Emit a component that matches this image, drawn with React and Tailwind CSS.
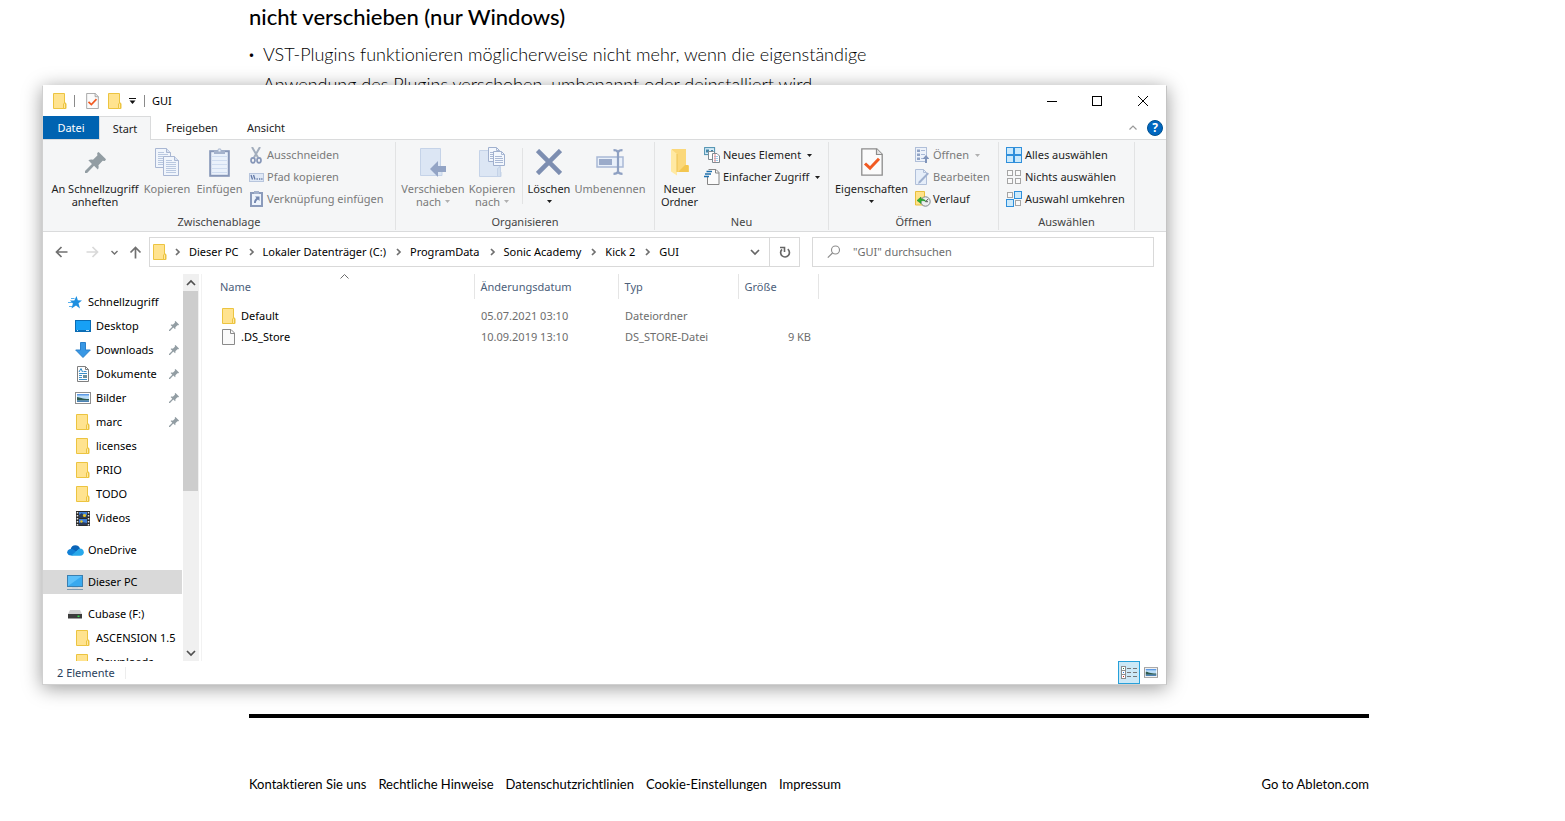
function Folder({ className = "" }) {
  return (
    <svg width="14" height="16" viewBox="0 0 14 16" className={`shrink-0 ${className}`} aria-hidden="true">
      <path d="M.5.500h11v9.500l1.500.5v5H.5z" fill="#ffe38f" stroke="#ecc440" />
      <path d="M10.500 15.500v-4.500l1-1h1v5.500z" fill="#ffe9a6" stroke="#ecc440" />
    </svg>
  );
}

function CheckPage({ w, h }) {
  return (
    <svg width={w} height={h} viewBox="0 0 22 28" className="shrink-0" aria-hidden="true">
      <path d="M.8.8h15l5.400 5.400v21H.8z" fill="#fbfbfb" stroke="#8c8c8c" strokeWidth="1.300" />
      <path d="M15.500.8v5.700h5.700" fill="#e4e4e4" stroke="#8c8c8c" strokeWidth="1.200" />
      <path d="M4 15.500l5 4.700 9-9.500" fill="none" stroke="#f15a22" strokeWidth="3" />
    </svg>
  );
}

function Caret({ className = "" }) {
  return (
    <svg width="5" height="3" viewBox="0 0 5 3" className={`inline-block shrink-0 ${className}`} aria-hidden="true">
      <path d="M0 0h5L2.500 3z" fill="currentColor" />
    </svg>
  );
}

function Pin({ size, className = "" }) {
  return (
    <svg width={size} height={size} viewBox="0 0 20 20" className={`shrink-0 ${className}`} aria-hidden="true">
      <path
        d="M13 0l7 7-1 1.500-2.200-.2-4 4.200c.4 1.800.2 3.200-.6 4.200L8.600 13.200 2 20H0v-2l6.600-6.600L3.200 7.900c1.200-.8 2.600-1 4.400-.6l4.200-4L11.600 1z"
        fill="#929da3"
      />
    </svg>
  );
}

function Pages() {
  return (
    <svg width="24" height="28" viewBox="0 0 24 28" aria-hidden="true">
      {[[0, 0], [8, 8]].map(([x, y]) => (
        <g key={x} transform={`translate(${x} ${y})`}>
          <path d="M.5.500h11l4 4V19.500H.5z" fill="#f0f5fc" stroke="#a9b7d3" />
          <path d="M11.500.500v4h4" fill="#d8e2f2" stroke="#a9b7d3" />
          <path d="M3 6.500h10M3 8.500h10M3 10.500h10M3 12.500h10M3 14.500h10M3 16.500h10M3 4.500h6" stroke="#b9c8e0" />
        </g>
      ))}
    </svg>
  );
}

function Clipboard() {
  return (
    <svg width="21" height="29" viewBox="0 0 21 29" aria-hidden="true">
      <rect x="1.200" y="3.200" width="18.600" height="24.600" fill="#eaf1fb" stroke="#8797b8" strokeWidth="2" />
      <path d="M3 8.500h15M3 12.500h15M3 16.500h15M3 20.500h15M3 24.500h15" stroke="#cfdcf0" />
      <path d="M5 6V2.500h3.500C8.500 1 9.300.4 10.500.4s2 .6 2 2.100H16V6z" fill="#a4b2cc" />
      <rect x="9.500" y="1.500" width="2" height="2" fill="#eaf1fb" />
    </svg>
  );
}

function MoveTo() {
  return (
    <svg width="28" height="30" viewBox="0 0 28 30" aria-hidden="true">
      <path d="M1.500 1.500h20v22l1.500.500v4.500H1.500z" fill="#dce6f4" stroke="#c5d3e8" />
      <path d="M11 22l8-8v5h8v6h-8v5z" fill="#93a4c5" />
    </svg>
  );
}

function CopyTo() {
  return (
    <svg width="28" height="30" viewBox="0 0 28 30" aria-hidden="true">
      <path d="M1.500 3.500h20v21l1.500.500v4.500H1.500z" fill="#dce6f4" stroke="#c5d3e8" />
      <path d="M19.500 29.500v-8l3-2v10z" fill="#d3dfef" stroke="#c5d3e8" />
      {[[10, 0], [15, 4]].map(([x, y]) => (
        <g key={x} transform={`translate(${x} ${y})`}>
          <path d="M.5.500h8l3 3v11H.5z" fill="#f3f7fd" stroke="#a0b0ce" />
          <path d="M8.500.500v3h3M2 5.500h7M2 7.500h8M2 9.500h8M2 11.500h8" fill="none" stroke="#a9b8d4" />
        </g>
      ))}
    </svg>
  );
}

function Cross() {
  return (
    <svg width="26" height="26" viewBox="0 0 26 26" aria-hidden="true">
      <path d="M1.500 1.500l23 23M24.500 1.500l-23 23" stroke="#7d8eb1" strokeWidth="4.600" />
    </svg>
  );
}

function Rename() {
  return (
    <svg width="28" height="26" viewBox="0 0 28 26" aria-hidden="true">
      <rect x="1" y="8" width="26" height="10" fill="#e9f0fa" stroke="#a9b9d6" strokeWidth="1.500" />
      <rect x="3" y="10" width="13" height="6" fill="#9babca" />
      <path d="M17.500 1.200c2.500 0 4 .6 4.500 2.200.5-1.600 2-2.200 4.500-2.200M22 3v20M17.500 24.800c2.500 0 4-.6 4.500-2.200.5 1.600 2 2.200 4.500 2.200" fill="none" stroke="#8ea0c2" strokeWidth="2.200" />
    </svg>
  );
}

function NewFolder() {
  return (
    <svg width="20" height="28" viewBox="0 0 20 28" aria-hidden="true">
      <path d="M2 1h14v16l3 1v6H2z" fill="#fbd87a" />
      <path d="M15 17h3.500v7H8z" fill="#f3c650" />
      <path d="M1 1l6 5v21.500l-6-4z" fill="#ffe9a3" />
      <path d="M7 6v18" stroke="#edc251" />
    </svg>
  );
}

function Scissors() {
  return (
    <svg width="12" height="17" viewBox="0 0 12 17" aria-hidden="true">
      <path d="M2 0l6 10.500M10 0L4 10.500" stroke="#a3aebd" strokeWidth="2" />
      <ellipse cx="3" cy="13.300" rx="2" ry="2.500" fill="none" stroke="#8797b8" strokeWidth="1.700" />
      <ellipse cx="9" cy="13.300" rx="2" ry="2.500" fill="none" stroke="#8797b8" strokeWidth="1.700" />
    </svg>
  );
}

function PathIcon() {
  return (
    <svg width="15" height="9" viewBox="0 0 15 9" aria-hidden="true">
      <rect x=".5" y=".5" width="14" height="8" fill="#dfe8f5" stroke="#b7c5dd" />
      <path d="M2 2l1.500 4.500M4.500 2L6 6.500M7.500 6h1.300M10 6h1.300M12.200 6h1.300" stroke="#6379a6" strokeWidth="1.300" />
    </svg>
  );
}

function ShortcutClip() {
  return (
    <svg width="13" height="16" viewBox="0 0 13 16" aria-hidden="true">
      <rect x="1" y="2" width="11" height="13" fill="#eef4fc" stroke="#8b9bbb" strokeWidth="2" />
      <rect x="4" y="0" width="5" height="3" fill="#a4b2cc" />
      <path d="M5 5.500h4.500V10L8 8.500c-1.500 1-2 2-2.200 3.500H4c0-2 .8-3.600 2.400-5z" fill="#7387b0" />
    </svg>
  );
}

function NewItem() {
  return (
    <svg width="16" height="16" viewBox="0 0 16 16" aria-hidden="true">
      <rect x=".6" y=".6" width="10" height="7" fill="#d5ecf8" stroke="#4a8fae" />
      <path d="M2 2.500h3v3H2zM7 3h2v2H7z" fill="#4386a8" />
      <path d="M4.500 4.500h5l2 2v6h-7z" fill="#fff" stroke="#808b92" />
      <path d="M8.500 6.500h4.500l2.500 2.500v6.500h-7z" fill="#fff" stroke="#808b92" />
      <path d="M10 9.500h4M10 11.500h4M10 13.500h4" stroke="#9ecbec" />
      <path d="M11 7v8" stroke="#ef8d8d" />
    </svg>
  );
}

function EasyAccess() {
  return (
    <svg width="16" height="16" viewBox="0 0 16 16" aria-hidden="true">
      <path d="M4.500.5h7.500l3 3v12H3.500v-8" fill="#fbfbfb" stroke="#858585" />
      <path d="M11.500.5v3.500H15" fill="none" stroke="#858585" />
      <path d="M2.500 2.500H8M1 5H7M0 7.500H5" stroke="#1f70ad" strokeWidth="1.500" />
    </svg>
  );
}

function OpenIcon() {
  return (
    <svg width="14" height="16" viewBox="0 0 14 16" aria-hidden="true">
      <rect x=".5" y=".5" width="11" height="14" fill="#edf2fa" stroke="#b0bfd9" />
      <path d="M2 2.500h3v2.500H2zM2 6.500h3V9H2zM2 10.500h3V13H2z" fill="#8fa2c4" />
      <path d="M6 3.500h4M6 7.500h4M6 11.500h3" stroke="#a9b9d6" />
      <path d="M11 8l3.500 4H12v4h-2v-4H7.500z" fill="#8094ba" />
    </svg>
  );
}

function EditIcon() {
  return (
    <svg width="14" height="16" viewBox="0 0 14 16" aria-hidden="true">
      <path d="M.5.500h8l3 3V15.500H.5z" fill="#e6eef9" stroke="#b0bfd9" />
      <path d="M8.500.500v3h3" fill="none" stroke="#b0bfd9" />
      <path d="M12.500 3.500l1.500 1.300-8.500 9-2.500 1.200.8-2.600z" fill="#9fb0cf" />
    </svg>
  );
}

function History() {
  return (
    <svg width="17" height="16" viewBox="0 0 17 16" aria-hidden="true">
      <path d="M1.500.5h9v9l1 4.500h-10z" fill="#ffe28a" stroke="#e9bf3c" />
      <circle cx="11.500" cy="10.500" r="4.700" fill="#eceff0" stroke="#7d8589" />
      <path d="M11.500 10.700l2.700-2.700M11.500 10.700h2.500" fill="none" stroke="#555" />
      <path d="M3 9.500l4-3.500v2c2.500-.3 4 .7 4.500 2.200-1.500-.7-3-.7-4.500-.2V12.500z" fill="#2eae34" stroke="#1b8a22" strokeWidth=".5" />
    </svg>
  );
}

function Squares({ filled }) {
  const cells = [[0, 0], [8, 0], [0, 8], [8, 8]];
  return (
    <svg width="16" height="16" viewBox="0 0 16 16" aria-hidden="true">
      {cells.map(([x, y], i) =>
        filled.includes(i) ? (
          <rect key={i} x={x + 0.5} y={y + 0.5} width="7" height="7" fill="#cbe9fb" stroke="#2f8fdb" />
        ) : (
          <rect key={i} x={x + 1.5} y={y + 1.5} width="5" height="5" fill="#fafafa" stroke="#a5a5a5" />
        )
      )}
    </svg>
  );
}

function BigButton({ icon, lines, width, disabled, caret }) {
  return (
    <button
      type="button"
      disabled={disabled}
      className={`flex shrink-0 flex-col items-center ${width} ${disabled ? "text-[#7a7a7a]" : "text-[#1e1e1e]"}`}
    >
      <span className="flex h-10 items-center justify-center">{icon}</span>
      {lines.map((line, i) => (
        <span key={line} className="flex h-[13px] items-center whitespace-nowrap leading-[13px]">
          {line}
          {caret && i === 1 && <Caret className="ml-1 text-[#b0b0b0]" />}
        </span>
      ))}
      {caret && lines.length === 1 && (
        <span className="flex h-[13px] items-center">
          <Caret />
        </span>
      )}
    </button>
  );
}

function SmallButton({ icon, label, disabled, caret }) {
  return (
    <button
      type="button"
      disabled={disabled}
      className={`flex h-[22px] items-center whitespace-nowrap ${disabled ? "text-[#7a7a7a]" : "text-[#1e1e1e]"}`}
    >
      <span className="mr-0.5 flex w-[18px] justify-center">{icon}</span>
      {label}
      {caret && <Caret className={`ml-1.5 ${disabled ? "text-[#b0b0b0]" : "text-[#1e1e1e]"}`} />}
    </button>
  );
}

function Group({ label, width, inset, children }) {
  return (
    <section aria-label={label} className={`flex shrink-0 flex-col border-r border-[#e2e3e4] ${width}`}>
      <div className={`flex h-[72px] items-start gap-px ${inset}`}>{children}</div>
      <div className="text-center leading-4 text-[#444]">{label}</div>
    </section>
  );
}

function Ribbon() {
  return (
    <div className="flex overflow-hidden border-y border-[#dadbdc] bg-[#f5f6f7] pb-px pt-0.5 text-[11px]">
      <Group label="Zwischenablage" width="w-[353px]" inset="pl-1.5">
        <BigButton width="w-[92px]" icon={<Pin size={21} />} lines={["An Schnellzugriff", "anheften"]} />
        <BigButton width="w-[50px]" disabled icon={<Pages />} lines={["Kopieren"]} />
        <BigButton width="w-[53px]" disabled icon={<Clipboard />} lines={["Einfügen"]} />
        <div className="flex flex-col pt-0.5">
          <SmallButton disabled icon={<Scissors />} label="Ausschneiden" />
          <SmallButton disabled icon={<PathIcon />} label="Pfad kopieren" />
          <SmallButton disabled icon={<ShortcutClip />} label="Verknüpfung einfügen" />
        </div>
      </Group>
      <Group label="Organisieren" width="w-[259px]" inset="pl-1">
        <BigButton width="w-[66px]" disabled caret icon={<MoveTo />} lines={["Verschieben", "nach"]} />
        <BigButton width="w-[50px]" disabled caret icon={<CopyTo />} lines={["Kopieren", "nach"]} />
        <div className="ml-1 mr-px mt-1.5 h-14 border-l border-[#e2e3e4]" />
        <BigButton width="w-12" caret icon={<Cross />} lines={["Löschen"]} />
        <BigButton width="w-[72px]" disabled icon={<Rename />} lines={["Umbenennen"]} />
      </Group>
      <Group label="Neu" width="w-[174px]" inset="pl-0.5">
        <BigButton width="w-[45px]" icon={<NewFolder />} lines={["Neuer", "Ordner"]} />
        <div className="flex flex-col pt-0.5">
          <SmallButton caret icon={<NewItem />} label="Neues Element" />
          <SmallButton caret icon={<EasyAccess />} label="Einfacher Zugriff" />
        </div>
      </Group>
      <Group label="Öffnen" width="w-[170px]" inset="pl-0.5">
        <BigButton width="w-[81px]" caret icon={<CheckPage w={22} h={28} />} lines={["Eigenschaften"]} />
        <div className="flex flex-col pt-0.5">
          <SmallButton disabled caret icon={<OpenIcon />} label="Öffnen" />
          <SmallButton disabled icon={<EditIcon />} label="Bearbeiten" />
          <SmallButton icon={<History />} label="Verlauf" />
        </div>
      </Group>
      <Group label="Auswählen" width="w-[136px]" inset="pl-1.5">
        <div className="flex flex-col pt-0.5">
          <SmallButton icon={<Squares filled={[0, 1, 2, 3]} />} label="Alles auswählen" />
          <SmallButton icon={<Squares filled={[]} />} label="Nichts auswählen" />
          <SmallButton icon={<Squares filled={[1, 2]} />} label="Auswahl umkehren" />
        </div>
      </Group>
    </div>
  );
}

function TitleBar() {
  return (
    <header className="flex h-[30px] items-center pb-px">
      <div className="flex flex-1 items-center pl-2.5">
        <Folder />
        <span className="ml-[7px] h-3 border-l border-[#8a8a8a]" />
        <button type="button" aria-label="Eigenschaften" className="ml-[11px]">
          <CheckPage w={13} h={16} />
        </button>
        <button type="button" aria-label="Neuer Ordner" className="ml-[9px]">
          <Folder />
        </button>
        <button type="button" aria-label="Symbolleiste anpassen" className="ml-[7px]">
          <svg width="7" height="6" viewBox="0 0 7 6" aria-hidden="true">
            <path d="M0 .5h7" stroke="#111" />
            <path d="M.5 2.500h6L3.500 6z" fill="#111" />
          </svg>
        </button>
        <span className="ml-2 h-3 border-l border-[#8a8a8a]" />
        <h2 className="ml-[7px]">GUI</h2>
      </div>
      <button type="button" aria-label="Minimieren" className="flex h-full w-[45px] items-center justify-center">
        <svg width="10" height="10" viewBox="0 0 10 10"><path d="M0 5.500h10" stroke="#000" /></svg>
      </button>
      <button type="button" aria-label="Maximieren" className="flex h-full w-[46px] items-center justify-center">
        <svg width="10" height="10" viewBox="0 0 10 10"><rect x=".5" y=".5" width="9" height="9" fill="none" stroke="#000" /></svg>
      </button>
      <button type="button" aria-label="Schließen" className="flex h-full w-[46px] items-center justify-center">
        <svg width="10" height="10" viewBox="0 0 10 10"><path d="M0 0l10 10M10 0L0 10" stroke="#000" /></svg>
      </button>
    </header>
  );
}

function Tabs() {
  return (
    <nav aria-label="Menüband" className="-mb-px flex h-6 items-stretch text-[11px] text-[#222]">
      <button type="button" className="mb-px w-14 bg-[#0063b1] text-white">Datei</button>
      <button type="button" className="z-10 w-[52px] border border-b-0 border-[#dadbdc] bg-[#f5f6f7]">Start</button>
      <button type="button" className="w-[82px]">Freigeben</button>
      <button type="button" className="w-[66px]">Ansicht</button>
      <div className="flex flex-1 items-center justify-end gap-2.5 pb-px pr-[3px]">
        <button type="button" aria-label="Menüband minimieren">
          <svg width="8" height="5" viewBox="0 0 8 5"><path d="M.5 4.500L4 1l3.500 3.500" fill="none" stroke="#999" strokeWidth="1.200" /></svg>
        </button>
        <button type="button" aria-label="Hilfe" className="flex size-4 items-center justify-center rounded-full border border-[#00508f] bg-[#0067c0] text-xs font-bold leading-3 text-white">
          ?
        </button>
      </div>
    </nav>
  );
}

function Chevron({ dir = "right", className = "" }) {
  const d = { right: "M2 2l3 3-3 3", down: "M1 3l4 4 4-4", up: "M1 7l4-4 4 4" }[dir];
  const w = dir === "right" ? 8 : 10;
  return (
    <svg width={w} height="10" viewBox={`0 0 ${w} 10`} className={`shrink-0 ${className}`} aria-hidden="true">
      <path d={d} fill="none" stroke="currentColor" strokeWidth="1.700" />
    </svg>
  );
}

function Arrow({ dir }) {
  const d = dir === "left" ? "M12.500 6H1.500M6.500 1l-5 5 5 5" : dir === "right" ? "M.5 6h11M6.500 1l5 5-5 5" : "M6.500 12.500V1.500M1.500 6.500l5-5 5 5";
  return (
    <svg width="13" height="13" viewBox="0 0 13 13" aria-hidden="true">
      <path d={d} fill="none" stroke="currentColor" strokeWidth="1.700" />
    </svg>
  );
}

const crumbs = ["Dieser PC", "Lokaler Datenträger (C:)", "ProgramData", "Sonic Academy", "Kick 2", "GUI"];

function AddressRow() {
  return (
    <div className="flex items-center px-3 py-[5px]">
      <div className="flex w-[94px] shrink-0 items-center text-[#707070]">
        <button type="button" aria-label="Zurück"><Arrow dir="left" /></button>
        <button type="button" aria-label="Vorwärts" disabled className="ml-[18px] text-[#d9d9d9]"><Arrow dir="right" /></button>
        <button type="button" aria-label="Verlauf" className="ml-3">
          <svg width="7" height="5" viewBox="0 0 7 5"><path d="M.5 1l3 3 3-3" fill="none" stroke="currentColor" strokeWidth="1.400" /></svg>
        </button>
        <button type="button" aria-label="Nach oben" className="ml-[11px]"><Arrow dir="up" /></button>
      </div>
      <div className="flex h-[30px] flex-1 items-center border border-[#d9d9d9] bg-white pl-[3px]">
        <Folder />
        <ol className="flex flex-1 items-center gap-0.5">
          {crumbs.map((c) => (
            <li key={c} className="flex items-center whitespace-nowrap">
              <Chevron className="mx-[7px] text-[#6f6f6f]" />
              <a href="#">{c}</a>
            </li>
          ))}
        </ol>
        <button type="button" aria-label="Frühere Orte" className="flex w-[29px] justify-center text-[#666]"><Chevron dir="down" /></button>
        <button type="button" aria-label="Aktualisieren" className="flex h-full w-[30px] items-center justify-center border-l border-[#d9d9d9]">
          <svg width="12" height="13" viewBox="0 0 12 13">
            <path d="M8.800 3.200A4.400 4.400 0 1 1 3 3.400" fill="none" stroke="#666" strokeWidth="1.700" />
            <path d="M1 1.500h4.500v4.500" fill="none" stroke="#666" strokeWidth="1.600" />
          </svg>
        </button>
      </div>
      <label className="ml-3 flex h-[30px] w-[342px] items-center border border-[#d9d9d9] bg-white pl-3.5">
        <svg width="14" height="14" viewBox="0 0 14 14" aria-hidden="true">
          <circle cx="8.500" cy="5" r="4" fill="none" stroke="#8c8c8c" strokeWidth="1.100" />
          <path d="M5.500 8L.8 12.700" stroke="#8c8c8c" strokeWidth="1.200" />
        </svg>
        <input aria-label="Suchen" placeholder={'"GUI" durchsuchen'} className="ml-3 min-w-0 flex-1 outline-none placeholder:text-[#6d6d6d]" />
      </label>
    </div>
  );
}

function StarIcon() {
  return (
    <svg width="14" height="13" viewBox="0 0 14 13" aria-hidden="true">
      <path d="M8.500 0l1.300 4.200 4.200.3-3.500 2.800L12 12.500 8 9.600l-4.500 3 1.400-5L2 4.600l4.300-.2z" fill="#1e8fe0" />
      <path d="M3 2.500h3.500M0 6.500h4M1 10.500h3" stroke="#57b0ee" />
    </svg>
  );
}
function DesktopIcon() {
  return (
    <svg width="16" height="12" viewBox="0 0 16 12" aria-hidden="true">
      <rect x=".5" y=".5" width="15" height="11" fill="#17a0f5" stroke="#0a6cb4" />
      <path d="M1 10.500h14" stroke="#0b6fb8" />
      <path d="M2 10.500h1M11 10.500h3" stroke="#bfe3fa" />
    </svg>
  );
}
function DownIcon() {
  return (
    <svg width="16" height="16" viewBox="0 0 16 16" aria-hidden="true">
      <path d="M5.500.5h5V8H15.300L8 15.500.7 8h4.800z" fill="#3897e4" stroke="#2b80cb" />
    </svg>
  );
}
function DocIcon() {
  return (
    <svg width="12" height="16" viewBox="0 0 12 16" aria-hidden="true">
      <path d="M.5.500h8l3 3V15.500H.5z" fill="#fdfdfd" stroke="#7f7f7f" />
      <path d="M8.500.500v3h3" fill="none" stroke="#7f7f7f" />
      <path d="M2 6l2-3.500L5.500 6" fill="none" stroke="#2a88c8" />
      <path d="M6.500 5.500h3M2 7.500h8M2 9.500h3M2 11.500h3M2 13.500h8" stroke="#3b8fc9" />
      <rect x="6" y="9" width="4" height="3" fill="#6b8f9c" />
    </svg>
  );
}
function PictureIcon({ w = 16, h = 12 }) {
  return (
    <svg width={w} height={h} viewBox="0 0 16 12" aria-hidden="true">
      <rect x=".5" y=".5" width="15" height="11" fill="#fff" stroke="#8f8f8f" />
      <rect x="2" y="2" width="12" height="8" fill="#b9dcf7" />
      <path d="M2 2h12v1.500H2z" fill="#5e9be6" />
      <path d="M2 5c3 .2 5 2 12 2v1.500H2z" fill="#2f5a4e" />
      <path d="M2 8.500h12V10H2z" fill="#4d83b5" />
    </svg>
  );
}
function VideoIcon() {
  return (
    <svg width="14" height="15" viewBox="0 0 14 15" aria-hidden="true">
      <path d="M0 0h14v15H0z" fill="#2b2b2b" />
      <path d="M1.500 1v14M12.500 1v14" stroke="#e8e8e8" strokeWidth="1.500" strokeDasharray="1.500 1.500" />
      <path d="M3 1h8v6H3zM3 8h8v6H3z" fill="#3f7fd8" />
      <path d="M3 4l3-2 2 3 3-1v3H3zM3 12l3-1 5 1v2H3z" fill="#2c3c5a" />
      <circle cx="8.500" cy="4.500" r="1.600" fill="#e4c52a" />
      <circle cx="5.500" cy="10.500" r="1.200" fill="#e4c52a" />
    </svg>
  );
}
function CloudIcon() {
  return (
    <svg width="17" height="11" viewBox="0 0 17 11" className="shrink-0" aria-hidden="true">
      <path d="M3.500 4.500C4 1.800 6 .3 8.300.3c2.200 0 4 1.200 4.800 3.300L9 7z" fill="#0a64b8" />
      <path d="M4.200 10.500C1.800 10.500.2 9.200.2 7.200S1.700 3.900 4 3.900c1.300 0 2.300.5 3.500 1.400L12 9z" fill="#1180d6" />
      <path d="M4 10.700L12.500 3.600c2.500-.2 4.300 1.500 4.300 3.600 0 2-1.400 3.500-3.600 3.500z" fill="#28a8ea" />
    </svg>
  );
}
function MonitorIcon() {
  return (
    <svg width="16" height="15" viewBox="0 0 16 15" aria-hidden="true">
      <rect x=".5" y=".5" width="15" height="11" fill="#5cc0fa" stroke="#3a7fb0" />
      <path d="M1 11L15 1v10z" fill="#38a9ef" />
      <path d="M5 12h6v1.500H5z" fill="#c5d3dd" />
      <path d="M0 14.500h16" stroke="#7c99b0" />
    </svg>
  );
}
function DriveIcon() {
  return (
    <svg width="14" height="9" viewBox="0 0 14 9" aria-hidden="true">
      <path d="M2 0h10l2 4H0z" fill="#d2d2d2" />
      <path d="M0 4h14v4.500H0z" fill="#3c3c3c" />
      <path d="M9.500 6.300h2" stroke="#35dd4c" strokeWidth="1.500" />
    </svg>
  );
}

function TreeItem({ icon, label, root, pinned, selected }) {
  return (
    <li>
      <a href="#" className={`flex h-6 items-center whitespace-nowrap ${root ? "pl-6" : "pl-8"} ${selected ? "bg-[#d9d9d9]" : ""}`}>
        <span className="mr-[5px] flex w-4 shrink-0 justify-center">{icon}</span>
        <span className="flex-1">{label}</span>
        {pinned && <Pin size={10} className="mr-[3px]" />}
      </a>
    </li>
  );
}

function Sidebar() {
  return (
    <nav aria-label="Navigationsbereich" className="flex h-[387px] w-[159px] shrink-0 overflow-hidden border-r border-[#f2f2f2]">
      <div className="w-[139px] shrink-0 overflow-hidden pt-4">
        <ul>
          <TreeItem root icon={<StarIcon />} label="Schnellzugriff" />
          <TreeItem pinned icon={<DesktopIcon />} label="Desktop" />
          <TreeItem pinned icon={<DownIcon />} label="Downloads" />
          <TreeItem pinned icon={<DocIcon />} label="Dokumente" />
          <TreeItem pinned icon={<PictureIcon />} label="Bilder" />
          <TreeItem pinned icon={<Folder />} label="marc" />
          <TreeItem icon={<Folder />} label="licenses" />
          <TreeItem icon={<Folder />} label="PRIO" />
          <TreeItem icon={<Folder />} label="TODO" />
          <TreeItem icon={<VideoIcon />} label="Videos" />
        </ul>
        <ul className="mt-2 flex flex-col gap-2">
          <TreeItem root icon={<CloudIcon />} label="OneDrive" />
          <TreeItem root selected icon={<MonitorIcon />} label="Dieser PC" />
          <TreeItem root icon={<DriveIcon />} label="Cubase (F:)" />
        </ul>
        <ul>
          <TreeItem icon={<Folder />} label="ASCENSION 1.5" />
          <TreeItem icon={<Folder />} label="Downloads" />
        </ul>
      </div>
      <div className="ml-px flex w-4 flex-col bg-[#f0f0f0] text-[#505050]">
        <button type="button" aria-label="Nach oben scrollen" className="flex h-[17px] items-center justify-center"><Chevron dir="up" /></button>
        <div className="h-[200px] w-[15px] bg-[#cdcdcd]" />
        <button type="button" aria-label="Nach unten scrollen" className="mt-auto flex h-[17px] items-center justify-center"><Chevron dir="down" /></button>
      </div>
    </nav>
  );
}

function FileTable() {
  return (
    <div className="relative min-w-0 flex-1">
      <svg width="9" height="5" viewBox="0 0 9 5" className="absolute left-[138px] top-0" aria-hidden="true">
        <path d="M.5 4.500l4-4 4 4" fill="none" stroke="#6b6b6b" />
      </svg>
      <table className="table-fixed border-collapse text-left text-[#6d6d6d]">
        <colgroup>
          <col className="w-[272px]" />
          <col className="w-[144px]" />
          <col className="w-[120px]" />
          <col className="w-[80px]" />
        </colgroup>
        <thead>
          <tr className="h-[25px] text-[#4c607a]">
            <th className="border-r border-[#e5e5e5] py-0 pl-[18px] font-normal">Name</th>
            <th className="border-r border-[#e5e5e5] py-0 pl-1.5 font-normal">Änderungsdatum</th>
            <th className="border-r border-[#e5e5e5] py-0 pl-1.5 font-normal">Typ</th>
            <th className="border-r border-[#e5e5e5] py-0 pl-1.5 font-normal">Größe</th>
          </tr>
        </thead>
        <tbody>
          <tr className="h-1.5"><td colSpan={4} className="p-0" /></tr>
          <tr className="h-[21px]">
            <td className="py-0 pl-5 text-black"><span className="flex items-center gap-[5px]"><Folder />Default</span></td>
            <td className="py-0 pl-[7px]">05.07.2021 03:10</td>
            <td className="py-0 pl-[7px]">Dateiordner</td>
            <td className="p-0" />
          </tr>
          <tr className="h-[21px]">
            <td className="py-0 pl-5 text-black">
              <span className="flex items-center gap-1.5">
                <svg width="13" height="16" viewBox="0 0 13 16" aria-hidden="true">
                  <path d="M.5.500h8.500l3.500 3.500V15.500H.5z" fill="#fafafa" stroke="#8a8a8a" />
                  <path d="M8.500.500v4h4" fill="none" stroke="#8a8a8a" />
                </svg>
                .DS_Store
              </span>
            </td>
            <td className="py-0 pl-[7px]">10.09.2019 13:10</td>
            <td className="py-0 pl-[7px]">DS_STORE-Datei</td>
            <td className="py-0 pr-[7px] text-right">9 KB</td>
          </tr>
        </tbody>
      </table>
    </div>
  );
}

function StatusBar() {
  return (
    <footer className="flex h-[23px] items-center pl-3.5 pr-2 text-[#2b3f5c]">
      <span className="border-r border-[#ededed] pr-2.5 leading-3">2 Elemente</span>
      <button type="button" aria-label="Details" className="ml-auto mr-1 flex h-[23px] w-[22px] items-center justify-center border border-[#26a0da] bg-[#cce8f6]">
        <svg width="16" height="13" viewBox="0 0 16 13" className="shrink-0">
          {[0, 4, 8].map((y, i) => (
            <g key={y}>
              <rect x=".5" y={y + 0.5} width="4" height="4" fill="#fff" stroke="#8c8c8c" />
              <rect x="2" y={y + 2} width="1" height="1" fill={["#2f7a4f", "#3080e0", "#d02020"][i]} />
              <path d={`M6 ${y + 2.5}h4M12 ${y + 2.5}h4`} stroke="#777" />
            </g>
          ))}
        </svg>
      </button>
      <button type="button" aria-label="Miniaturansichten"><PictureIcon w={14} h={11} /></button>
    </footer>
  );
}

function ExplorerWindow() {
  return (
    <div className="absolute left-[42px] right-[398px] top-[85px] border border-[#d0d0d0] border-r-[#c4c4c4] border-t-white bg-white font-['Noto_Sans','Open_Sans',sans-serif] text-[11px] leading-4 text-black shadow-[0_3px_18px_rgba(0,0,0,0.4)]">
      <TitleBar />
      <Tabs />
      <Ribbon />
      <AddressRow />
      <div className="flex pt-0.5">
        <Sidebar />
        <FileTable />
      </div>
      <StatusBar />
    </div>
  );
}

const footerLinks = ["Kontaktieren Sie uns", "Rechtliche Hinweise", "Datenschutzrichtlinien", "Cookie-Einstellungen", "Impressum"];

export default function App() {
  return (
    <div className="relative flex min-h-screen flex-col overflow-hidden bg-white pl-[249px] pr-[196px] font-[Lato,sans-serif] text-black [font-variant-ligatures:none]">
      <main className="flex-1">
        <h1 className="pt-px text-[22px] font-medium leading-8">nicht verschieben (nur Windows)</h1>
        <ul className="mt-1.5 max-w-[640px] text-lg font-light leading-[30px]">
          <li className="flex">
            <span className="w-3.5 shrink-0 font-bold">·</span>
            <span>VST-Plugins funktionieren möglicherweise nicht mehr, wenn die eigenständige Anwendung des Plugins verschoben, umbenannt oder deinstalliert wird.</span>
          </li>
        </ul>
      </main>
      <footer className="flex justify-between border-t-4 border-black pb-[27px] pt-14 text-[13px] leading-5">
        <nav aria-label="Fußzeile" className="flex gap-3">
          {footerLinks.map((l) => (
            <a key={l} href="#">{l}</a>
          ))}
        </nav>
        <a href="#">Go to Ableton.com</a>
      </footer>
      <ExplorerWindow />
    </div>
  );
}
